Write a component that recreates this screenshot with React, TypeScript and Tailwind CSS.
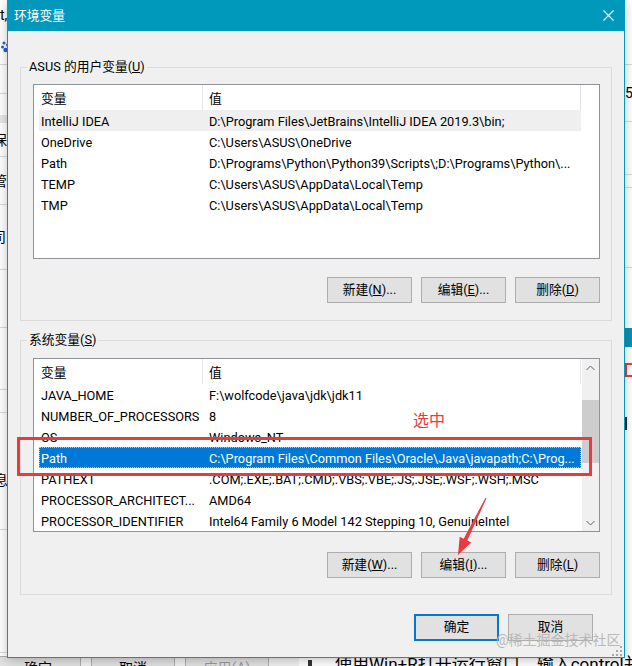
import type { ReactNode } from "react";
import clsx from "clsx";

// Windows 10 "环境变量" dialog, annotated (red box + arrow) over a half-hidden page.

type Row = { name: string; value: string; state?: "hover" | "selected" };

const userVars: Row[] = [
  { name: "IntelliJ IDEA", value: "D:\\Program Files\\JetBrains\\IntelliJ IDEA 2019.3\\bin;", state: "hover" },
  { name: "OneDrive", value: "C:\\Users\\ASUS\\OneDrive" },
  { name: "Path", value: "D:\\Programs\\Python\\Python39\\Scripts\\;D:\\Programs\\Python\\..." },
  { name: "TEMP", value: "C:\\Users\\ASUS\\AppData\\Local\\Temp" },
  { name: "TMP", value: "C:\\Users\\ASUS\\AppData\\Local\\Temp" },
];

const systemVars: Row[] = [
  { name: "JAVA_HOME", value: "F:\\wolfcode\\java\\jdk\\jdk11" },
  { name: "NUMBER_OF_PROCESSORS", value: "8" },
  { name: "OS", value: "Windows_NT" },
  { name: "Path", value: "C:\\Program Files\\Common Files\\Oracle\\Java\\javapath;C:\\Prog...", state: "selected" },
  { name: "PATHEXT", value: ".COM;.EXE;.BAT;.CMD;.VBS;.VBE;.JS;.JSE;.WSF;.WSH;.MSC" },
  { name: "PROCESSOR_ARCHITECT...", value: "AMD64" },
  { name: "PROCESSOR_IDENTIFIER", value: "Intel64 Family 6 Model 142 Stepping 10, GenuineIntel" },
];

function Key({ k }: { k: string }) {
  return (
    <>
      (<span className="underline underline-offset-[1px]">{k}</span>)
    </>
  );
}

function Button({ children, primary, tall }: { children: ReactNode; primary?: boolean; tall?: boolean }) {
  return (
    <button
      type="button"
      className={clsx(
        "flex w-[85px] items-center justify-center bg-[#e1e1e1] leading-none text-black",
        tall ? "h-[27px]" : "h-[26px]",
        primary ? "border-2 border-[#0078d7]" : "border border-[#adadad]"
      )}
    >
      {children}
    </button>
  );
}

function Chevron({ down }: { down?: boolean }) {
  return (
    <svg width="9" height="6" viewBox="0 0 9 6" fill="none">
      <path
        d={down ? "M0.5 1 L4.5 5 L8.5 1" : "M0.5 5 L4.5 1 L8.5 5"}
        stroke="#606060"
        strokeWidth="1"
      />
    </svg>
  );
}

function Scrollbar() {
  return (
    <div className="ml-[1px] flex w-[17px] flex-col bg-[#f0f0f0]">
      <div className="flex h-[17px] items-center justify-center">
        <Chevron />
      </div>
      <div className="flex-1">
        <div className="mt-[24px] h-[63px] bg-[#cdcdcd]" />
      </div>
      <div className="flex h-[17px] items-center justify-center">
        <Chevron down />
      </div>
    </div>
  );
}

function VarList({ rows, className, scroll }: { rows: Row[]; className: string; scroll?: boolean }) {
  return (
    <div className={clsx("flex w-[567px] overflow-hidden border border-[#8f9398] bg-white pl-[5px]", className)}>
      <div className="w-[542px] shrink-0">
        <div className="flex h-[25px]">
          <div className="flex w-[164px] items-center border-r border-[#e5e5e5] pl-[2px] pt-[2px]">变量</div>
          <div className="flex flex-1 items-center border-r border-[#e5e5e5] pl-[6px] pt-[2px]">值</div>
        </div>
        {rows.map((r) => (
          <div
            key={r.name + r.value}
            className={clsx(
              "flex h-[21px] items-center whitespace-nowrap pt-[2px]",
              r.state === "hover" && "bg-[#efefef]",
              r.state === "selected" &&
                "bg-[#0078d7] text-white outline-1 -outline-offset-1 outline-dotted outline-[#9cc8f0]"
            )}
          >
            <div className="w-[164px] shrink-0 overflow-hidden pl-[2px]">{r.name}</div>
            <div className="min-w-0 flex-1 overflow-hidden pl-[6px]">{r.value}</div>
          </div>
        ))}
      </div>
      {scroll ? <Scrollbar /> : null}
    </div>
  );
}

function Group({ label, className, children }: { label: ReactNode; className: string; children: ReactNode }) {
  return (
    <div className={clsx("relative mx-[12px] border border-[#dcdcdc] pl-[12px] pr-[11px]", className)}>
      <span className="absolute -top-[9px] left-[6px] bg-[#f0f0f0] px-[2px] leading-[16px]">{label}</span>
      {children}
    </div>
  );
}

function Dialog() {
  return (
    <div className="absolute left-[7px] top-0 flex h-[658px] w-[618px] flex-col border border-t-0 border-[#0099bc] bg-[#f0f0f0] shadow-[0_2px_10px_rgba(0,0,0,0.25)]">
      <div className="flex h-[31px] shrink-0 items-center justify-between bg-[#0099bc] pl-[6px] pr-[10px] text-white">
        <span>环境变量</span>
        <svg width="11" height="11" viewBox="0 0 11 11" fill="none">
          <path d="M0.5 0.5 L10.5 10.5 M10.5 0.5 L0.5 10.5" stroke="#fff" strokeWidth="1.1" />
        </svg>
      </div>

      <Group label={<>ASUS 的用户变量<Key k="U" /></>} className="mt-[36px] pb-[17px] pt-[16px]">
        <VarList rows={userVars} className="h-[175px]" />
        <div className="mt-[18px] flex justify-end gap-[9px]">
          <Button>新建<Key k="N" />...</Button>
          <Button>编辑<Key k="E" />...</Button>
          <Button>删除<Key k="D" /></Button>
        </div>
      </Group>

      <Group label={<>系统变量<Key k="S" /></>} className="mt-[19px] pb-[16px] pt-[17px]">
        <VarList rows={systemVars} className="h-[174px]" scroll />
        <div className="mt-[20px] flex justify-end gap-[9px]">
          <Button>新建<Key k="W" />...</Button>
          <Button>编辑<Key k="I" />...</Button>
          <Button>删除<Key k="L" /></Button>
        </div>
      </Group>

      <div className="mt-[19px] flex justify-end gap-[9px] pr-[31px]">
        <Button primary tall>确定</Button>
        <Button tall>取消</Button>
      </div>
    </div>
  );
}

// The page behind the dialog: only thin slivers on the left, right and bottom show.
function Backdrop() {
  return (
    <div className="flex h-full flex-col">
      <div className="flex h-[656px] shrink-0 justify-between">
        <div className="flex w-[40px] flex-col text-[14px] leading-[18px] text-black">
          <div className="flex h-[30px] items-center">t,</div>
          <div className="flex h-[35px] items-center border-b border-[#d9d9d9] pl-[1px]">
            <svg width="8" height="12" viewBox="0 0 8 12">
              <circle cx="3" cy="2" r="1.5" fill="#2f5bd3" />
              <circle cx="6.5" cy="4" r="1.5" fill="#2f5bd3" />
              <circle cx="1.5" cy="6" r="1.5" fill="#2f5bd3" />
              <circle cx="4.5" cy="9" r="2.2" fill="#2f5bd3" />
            </svg>
          </div>
          <div className="h-[29px] border-b border-[#d9d9d9]" />
          <div className="h-[21px]" />
          <div className="h-[8px] bg-[#e6e6e6]" />
          <div className="flex h-[34px] items-center border-b border-[#d9d9d9] pl-0">
            <span className="-ml-[7px]">保</span>
          </div>
          <div className="flex h-[48px] items-center border-b border-[#d9d9d9]">
            <span className="-ml-[7px]">管</span>
          </div>
          <div className="flex h-[65px] items-center border-b border-[#d9d9d9]">
            <span className="-ml-[8px]">司</span>
          </div>
          <div className="h-[58px] border-b border-[#d9d9d9]" />
          <div className="h-[62px] border-b border-[#d9d9d9]" />
          <div className="h-[23px] border-b border-[#d9d9d9]" />
          <div className="h-[50px]" />
          <div className="flex h-[34px] items-center">
            <span className="-ml-[6px]">息</span>
          </div>
          <div className="h-[33px] border-b border-[#d9d9d9]" />
          <div className="h-[123px] border-b border-[#d9d9d9]" />
        </div>

        <div className="flex w-[7px] flex-col text-[14px] leading-[18px] text-black">
          <div className="h-[65px] border-b border-[#d9d9d9]" />
          <div className="flex h-[57px] items-center border-b border-[#d9d9d9]">5/</div>
          <div className="h-[53px] border-b border-[#d9d9d9]" />
          <div className="h-[13px] border-b border-[#d9d9d9]" />
          <div className="h-[80px] border-b border-[#d9d9d9]" />
          <div className="h-[60px]" />
          <div className="h-[19px] bg-[#0e8fb3]" />
          <div className="h-[16px]" />
          <div className="h-[14px] border-y-2 border-l-2 border-[#e63b3f]" />
          <div className="h-[40px]" />
          <div className="h-[13px] w-[2px] bg-[#222]" />
        </div>
      </div>

      <div className="flex items-start text-[14px] leading-[20px]">
        <div className="flex gap-[10px] bg-[#f0f0f0] pr-[30px]">
          <div className="-ml-[5px] flex h-[24px] w-[86px] items-center justify-center border border-[#adadad] bg-[#e1e1e1]">确定</div>
          <div className="flex h-[24px] w-[84px] items-center justify-center border border-[#adadad] bg-[#e1e1e1]">取消</div>
          <div className="flex h-[24px] w-[84px] items-center justify-center border border-[#adadad] bg-[#e1e1e1] text-[#9a9a9a]">
            应用(A)
          </div>
        </div>
        <div className="ml-[9px] mt-[4px] h-[14px] w-[14px] border-2 border-[#333]" />
        <div className="-mt-[2px] ml-[23px] whitespace-nowrap text-[17px]">使用Win+R打开运行窗口，输入control并</div>
      </div>
    </div>
  );
}

export default function App() {
  return (
    <div className="relative h-[666px] w-[632px] overflow-hidden bg-white font-['Roboto','Noto_Sans_CJK_SC',sans-serif] text-[12.75px] text-black">
      <Backdrop />
      <Dialog />

      {/* annotation layer */}
      <div className="pointer-events-none absolute left-[17px] top-[437px] h-[39px] w-[575px] border-[3px] border-[#e63b3f]" />
      <span className="absolute left-[413px] top-[411px] text-[16px] leading-[20px] text-[#e63b3f]">选中</span>
      <svg className="pointer-events-none absolute left-0 top-0" width="632" height="666" viewBox="0 0 632 666">
        <polygon
          points="486.5,498.3 467.3,540.6 471.3,542.6 458,555 459.7,536.8 463.7,538.8 485.5,497.7"
          fill="#e63b3f"
        />
      </svg>
      <span className="absolute left-[496px] top-[630px] text-[14px] leading-[20px] text-[#b8b8b8]">@稀土掘金技术社区</span>
      <svg className="absolute left-[612px] top-[646px]" width="10" height="10" viewBox="0 0 10 10">
        <rect x="8" y="0" width="2" height="2" fill="#a8a8a8" />
        <rect x="4" y="4" width="2" height="2" fill="#a8a8a8" />
        <rect x="8" y="4" width="2" height="2" fill="#a8a8a8" />
        <rect x="0" y="8" width="2" height="2" fill="#a8a8a8" />
        <rect x="4" y="8" width="2" height="2" fill="#a8a8a8" />
        <rect x="8" y="8" width="2" height="2" fill="#a8a8a8" />
      </svg>
    </div>
  );
}
